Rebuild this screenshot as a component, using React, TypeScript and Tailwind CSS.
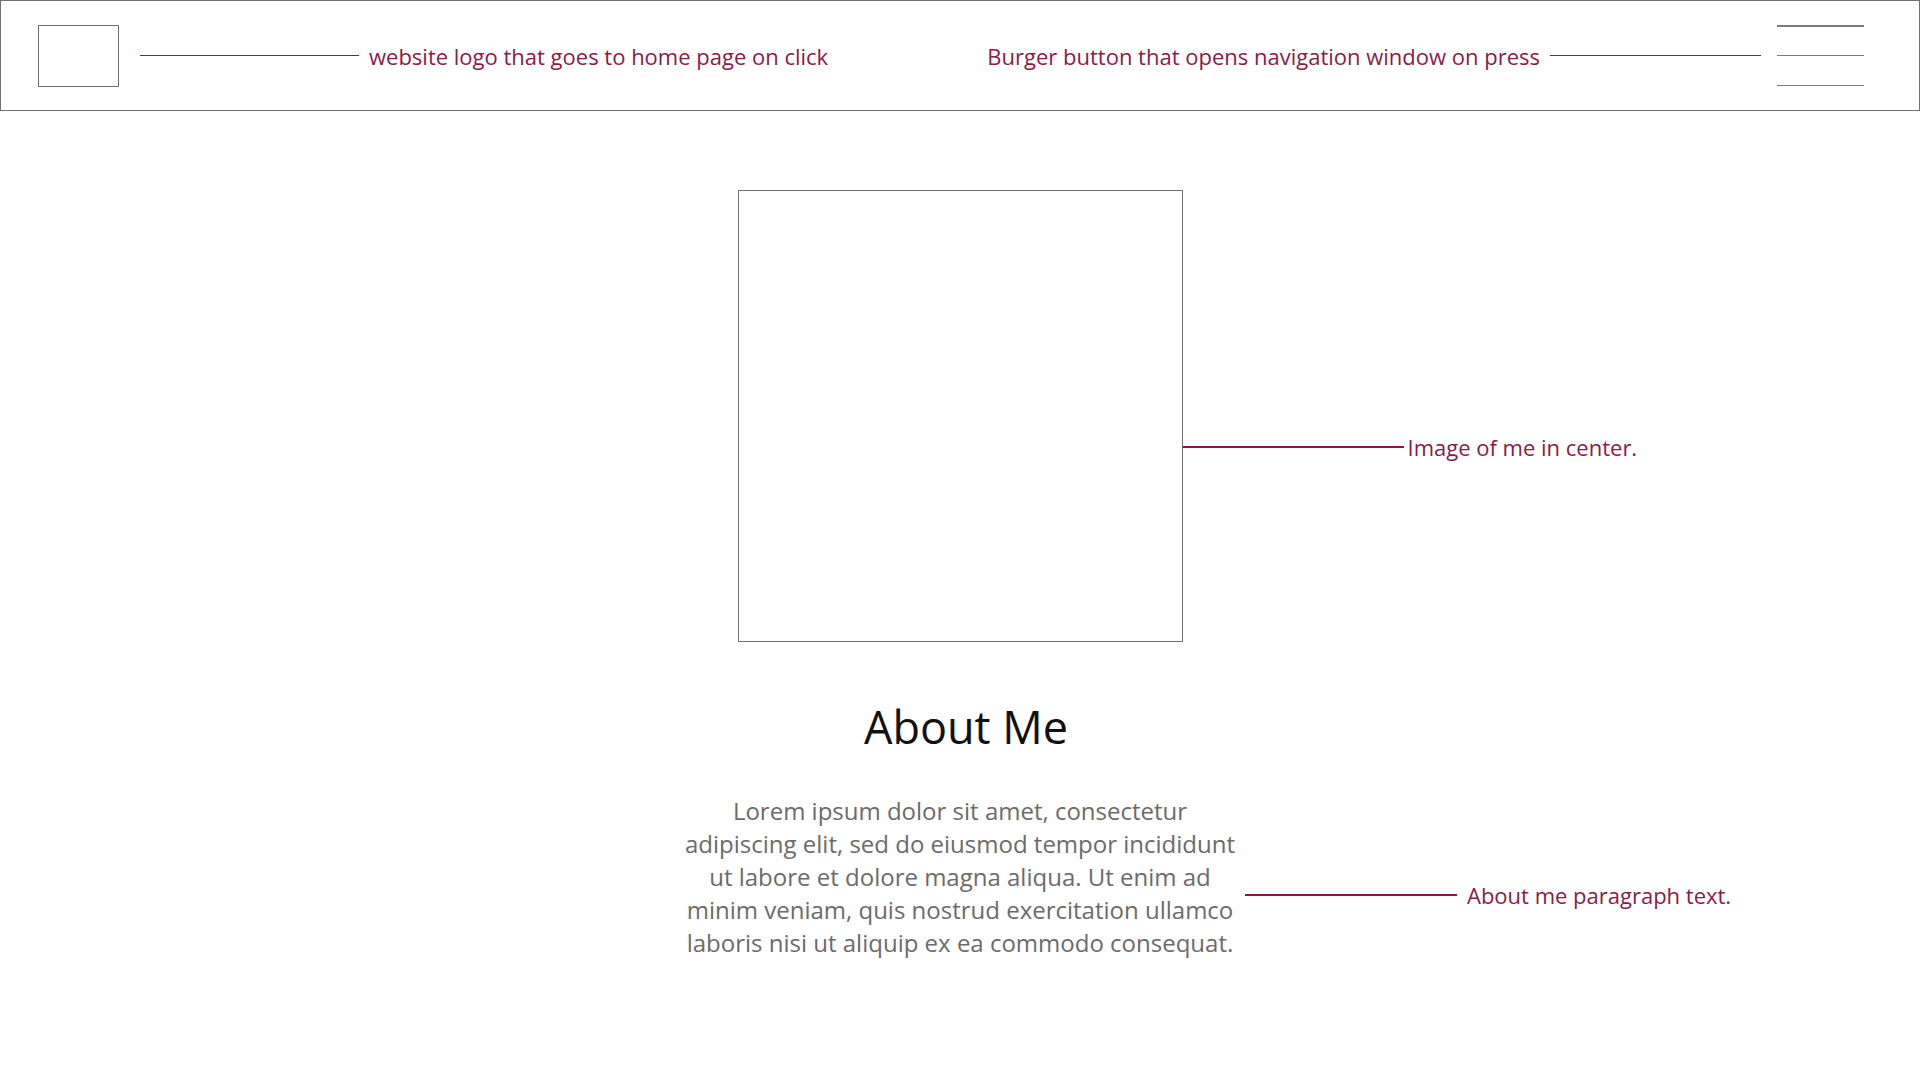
const font = { fontFamily: '"Open Sans", "Noto Sans", sans-serif' };

function Callout({ lineWidth, children, reverse }: { lineWidth: string; children: React.ReactNode; reverse?: boolean }) {
  return (
    <div className={`flex items-center gap-[10px] ${reverse ? 'flex-row-reverse' : ''}`}>
      <div className={`h-[1.5px] bg-[#8b1a4b] ${lineWidth}`} />
      <span className="text-[22px] leading-none text-[#8b1a4b] whitespace-nowrap">{children}</span>
    </div>
  );
}

export default function App() {
  return (
    <div className="min-h-screen w-full bg-white" style={font}>
      {/* Top bar */}
      <header className="h-[111px] border border-[#707070] flex items-center justify-between pl-[37px] pr-[55px]">
        <div className="flex items-center gap-[21px]">
          <button className="w-[81px] h-[62px] border border-[#707070]" aria-label="home" />
          <Callout lineWidth="w-[219px]">website logo that goes to home page on click</Callout>
        </div>
        <div className="flex items-center gap-[16px]">
          <Callout lineWidth="w-[211px]" reverse>Burger button that opens navigation window on press</Callout>
          <button className="w-[87px] h-[61px] flex flex-col justify-between" aria-label="menu">
            <span className="block h-[1.5px] w-full bg-[#7a7a7a]" />
            <span className="block h-[1.5px] w-full bg-[#7a7a7a]" />
            <span className="block h-[1.5px] w-full bg-[#7a7a7a]" />
          </button>
        </div>
      </header>

      <main className="pt-[79px]">
        {/* Portrait */}
        <div className="grid grid-cols-[1fr_445px_1fr]">
          <div />
          <div className="h-[452px] border border-[#707070]" />
          <div className="mt-[246px] self-start">
            <div className="flex items-center gap-[4px]">
              <div className="h-[1.5px] w-[221px] bg-[#8b1a4b]" />
              <span className="text-[22px] leading-none text-[#8b1a4b] whitespace-nowrap">Image of me in center.</span>
            </div>
          </div>
        </div>

        <h1 className="mt-[58px] pl-[12px] text-center text-[45px] leading-[54px] text-[#111111]">About Me</h1>

        {/* About paragraph */}
        <div className="mt-[40px] grid grid-cols-[1fr_auto_1fr]">
          <div />
          <p className="text-center text-[24px] leading-[33px] text-[#6b6b6b]">
            Lorem ipsum dolor sit amet, consectetur
            <br />
            adipiscing elit, sed do eiusmod tempor incididunt
            <br />
            ut labore et dolore magna aliqua. Ut enim ad
            <br />
            minim veniam, quis nostrud exercitation ullamco
            <br />
            laboris nisi ut aliquip ex ea commodo consequat.
          </p>
          <div className="mt-[90px] ml-[10px] self-start">
            <Callout lineWidth="w-[212px]">About me paragraph text.</Callout>
          </div>
        </div>
      </main>
    </div>
  );
}
